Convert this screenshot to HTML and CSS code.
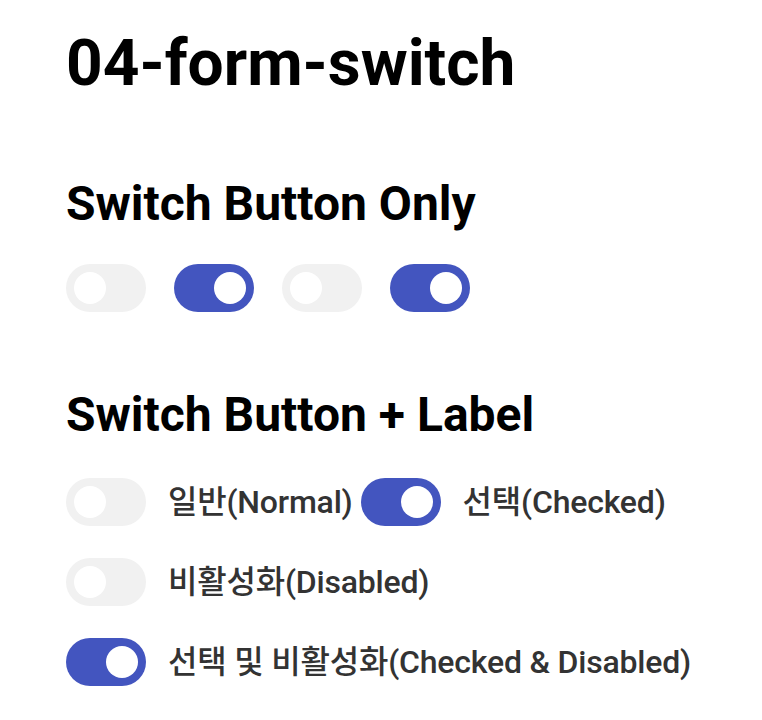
FILE: index.html
```html
<!DOCTYPE html>
<html lang="ko">
<head>
<meta charset="utf-8">
<title>04-form-switch</title>
<link rel="stylesheet" href="styles.css">
</head>
<body>
<main class="page">
  <h1 class="title">04-form-switch</h1>

  <section class="section section-only">
    <h2 class="section-title">Switch Button Only</h2>
    <div class="switch-row">
      <span class="switch"><span class="knob"></span></span>
      <span class="switch is-on"><span class="knob"></span></span>
      <span class="switch"><span class="knob"></span></span>
      <span class="switch is-on"><span class="knob"></span></span>
    </div>
  </section>

  <section class="section section-label">
    <h2 class="section-title">Switch Button + Label</h2>
    <div class="label-list">
      <label class="switch-label"><span class="switch"><span class="knob"></span></span><span class="label-text">일반(Normal)</span></label>
      <label class="switch-label"><span class="switch is-on"><span class="knob"></span></span><span class="label-text">선택(Checked)</span></label>
      <label class="switch-label"><span class="switch"><span class="knob"></span></span><span class="label-text">비활성화(Disabled)</span></label>
      <label class="switch-label"><span class="switch is-on"><span class="knob"></span></span><span class="label-text">선택 및 비활성화(Checked &amp; Disabled)</span></label>
    </div>
  </section>
</main>
</body>
</html>
```

FILE: styles.css
```css
html, body {
  margin: 0;
  padding: 0;
  background: #ffffff;
}

body {
  font-family: Roboto, "Noto Sans CJK KR", sans-serif;
  color: #000;
}

.page {
  padding: 24px 50px 0 66px;
}

.title {
  margin: 0;
  font-size: 64px;
  font-weight: 700;
  line-height: 80px;
}

.section-only {
  margin-top: 72px;
}

.section-label {
  margin-top: 75px;
}

.section-title {
  margin: 0 0 32px 0;
  font-size: 48px;
  font-weight: 700;
  line-height: 56px;
}

.section-label .section-title {
  margin-bottom: 35px;
}

.switch-row {
  display: flex;
  gap: 28px;
}

.switch {
  display: flex;
  align-items: center;
  flex: 0 0 auto;
  width: 80px;
  height: 48px;
  box-sizing: border-box;
  padding: 0 8px;
  border-radius: 24px;
  background: #f1f1f1;
}

.switch.is-on {
  background: #4355bf;
  justify-content: flex-end;
}

.knob {
  width: 32px;
  height: 32px;
  border-radius: 50%;
  background: #ffffff;
}

.label-list {
  display: flex;
  flex-wrap: wrap;
  gap: 32px 8px;
}

.switch-label {
  display: flex;
  align-items: center;
  gap: 22px;
}

.label-text {
  font-size: 32px;
  font-weight: 500;
  color: #333333;
  line-height: 48px;
  letter-spacing: -0.2px;
  white-space: nowrap;
}
```
